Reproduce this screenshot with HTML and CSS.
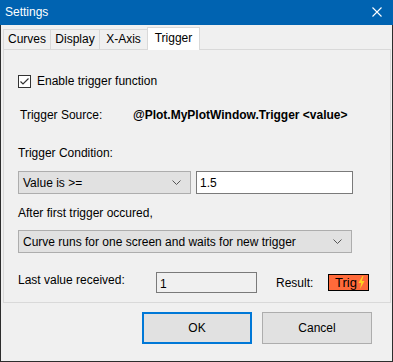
FILE: index.html
```html
<!DOCTYPE html>
<html lang="en">
<head>
  <meta charset="UTF-8">
  <title>Settings</title>
  <link rel="stylesheet" href="styles.css">
</head>
<body>
  <div class="window">
    <div class="titlebar">
      <span class="title">Settings</span>
      <svg class="close" width="10" height="10" viewBox="0 0 10 10">
        <path d="M0.5 0.5 L9.5 9.5 M9.5 0.5 L0.5 9.5" stroke="#fff" stroke-width="1.1" fill="none"/>
      </svg>
    </div>

    <div class="content">
      <div class="tabs">
        <div class="tab tab-curves">Curves</div>
        <div class="tab tab-display">Display</div>
        <div class="tab tab-xaxis">X-Axis</div>
        <div class="tab tab-trigger active">Trigger</div>
      </div>

      <div class="panel">
        <label class="row check-row">
          <svg class="checkbox" width="13" height="13" viewBox="0 0 13 13">
            <rect x="0.5" y="0.5" width="12" height="12" fill="#fff" stroke="#333"/>
            <path d="M2.5 6.5 L5 9 L10.5 3.5" stroke="#333" stroke-width="1.2" fill="none"/>
          </svg>
          <span>Enable trigger function</span>
        </label>

        <div class="row source-row">
          <span class="source-label">Trigger Source:</span>
          <span class="source-value">@Plot.MyPlotWindow.Trigger &lt;value&gt;</span>
        </div>

        <div class="row label-row cond-label">Trigger Condition:</div>

        <div class="row field-row cond-row">
          <div class="combo combo-cond">
            <span>Value is &gt;=</span>
            <svg class="chevron" width="9" height="5" viewBox="0 0 9 5">
              <path d="M0.5 0.5 L4.5 4.5 L8.5 0.5" stroke="#555" fill="none"/>
            </svg>
          </div>
          <div class="textbox textbox-cond">1.5</div>
        </div>

        <div class="row label-row after-label">After first trigger occured,</div>

        <div class="row field-row after-row">
          <div class="combo combo-after">
            <span>Curve runs for one screen and waits for new trigger</span>
            <svg class="chevron" width="9" height="5" viewBox="0 0 9 5">
              <path d="M0.5 0.5 L4.5 4.5 L8.5 0.5" stroke="#555" fill="none"/>
            </svg>
          </div>
        </div>

        <div class="row last-row">
          <span class="last-label">Last value received:</span>
          <div class="textbox readonly">1</div>
          <span class="result-label">Result:</span>
          <div class="trig">
            <span>Trig</span>
            <svg class="bolt" width="7" height="13" viewBox="0 0 7 13">
              <path d="M4.5 0 L0.5 7 L3.2 7 L2 13 L6.5 5 L3.8 5 L5.5 0 Z" fill="#ffd21f"/>
            </svg>
          </div>
        </div>
      </div>

      <div class="footer">
        <button class="btn default">OK</button>
        <button class="btn">Cancel</button>
      </div>
    </div>
  </div>
</body>
</html>
```

FILE: styles.css
```css
body {
  margin: 0;
  font-family: "Liberation Sans", Arial, sans-serif;
  font-size: 12px;
  color: #000;
  background: #f0f0f0;
}

.window {
  width: 393px;
  height: 362px;
  display: flex;
  flex-direction: column;
}

.titlebar {
  height: 25px;
  background: #0063b1;
  color: #fff;
  display: flex;
  align-items: center;
  justify-content: space-between;
  padding: 0 11px 0 5px;
  box-sizing: border-box;
  flex-shrink: 0;
}

.title {
  font-size: 12px;
  padding-bottom: 1px;
}

.close {
  display: block;
  margin-bottom: 1px;
}

.content {
  flex: 1;
  background: #f0f0f0;
  border: 1px solid #2d2d2d;
  border-top: none;
  padding: 0 1px 0 2px;
  display: flex;
  flex-direction: column;
}

.tabs {
  display: flex;
  align-items: flex-end;
  height: 22px;
  margin-top: 2px;
  position: relative;
  z-index: 1;
}

.tab {
  box-sizing: border-box;
  height: 20px;
  border: 1px solid #d9d9d9;
  border-bottom: none;
  background: #f0f0f0;
  text-align: center;
  line-height: 19px;
  margin-left: -1px;
}

.tab-curves { width: 48px; margin-left: 0; }
.tab-display { width: 50px; }
.tab-xaxis { width: 49px; }
.tab-trigger { width: 53px; }

.tab.active {
  height: 23px;
  margin-bottom: -1px;
  background: #fff;
  line-height: 21px;
}

.panel {
  box-sizing: border-box;
  height: 254px;
  border: 1px solid #d9d9d9;
  padding: 0 0 0 14px;
  display: flex;
  flex-direction: column;
}

.row {
  display: flex;
  align-items: center;
}

.check-row {
  margin-top: 23px;
  height: 16px;
}

.checkbox {
  display: block;
  margin-right: 6px;
}

.source-row {
  margin-top: 18px;
  height: 16px;
}

.source-label {
  width: 113px;
  padding-left: 2px;
}

.source-value {
  font-weight: bold;
}

.label-row {
  height: 16px;
}

.cond-label {
  margin-top: 22px;
}

.field-row {
  height: 23px;
}

.cond-row {
  margin-top: 10px;
}

.after-label {
  margin-top: 11px;
}

.after-row {
  margin-top: 9px;
}

.combo {
  box-sizing: border-box;
  height: 23px;
  background: #e1e1e1;
  border: 1px solid #adadad;
  display: flex;
  align-items: center;
  justify-content: space-between;
  padding: 0 9px 0 4px;
}

.combo-cond {
  width: 173px;
}

.combo-after {
  width: 334px;
}

.textbox {
  box-sizing: border-box;
  height: 23px;
  background: #fff;
  border: 1px solid #7a7a7a;
  padding: 0 3px;
  display: flex;
  align-items: center;
}

.textbox-cond {
  width: 157px;
  margin-left: 5px;
}

.last-row {
  margin-top: 19px;
  height: 21px;
}

.last-label {
  width: 138px;
  align-self: flex-start;
  margin-top: 1px;
}

.textbox.readonly {
  width: 101px;
  height: 21px;
  background: #f0f0f0;
  padding-top: 2px;
}

.result-label {
  margin-left: 19px;
  width: 52px;
}

.trig {
  box-sizing: border-box;
  width: 41px;
  height: 17px;
  background: #ff6a3a;
  border: 1px solid #000;
  display: flex;
  align-items: center;
  justify-content: center;
  padding-left: 3px;
  gap: 1px;
  font-size: 13px;
}

.bolt {
  display: block;
  flex-shrink: 0;
}

.footer {
  display: flex;
  justify-content: flex-end;
  gap: 10px;
  padding: 9px 19px 0 0;
}

.btn {
  width: 110px;
  height: 32px;
  background: #e1e1e1;
  border: 1px solid #adadad;
  font-family: inherit;
  font-size: 12px;
  color: #000;
  padding: 0;
}

.btn.default {
  border: 2px solid #0078d7;
}
```
